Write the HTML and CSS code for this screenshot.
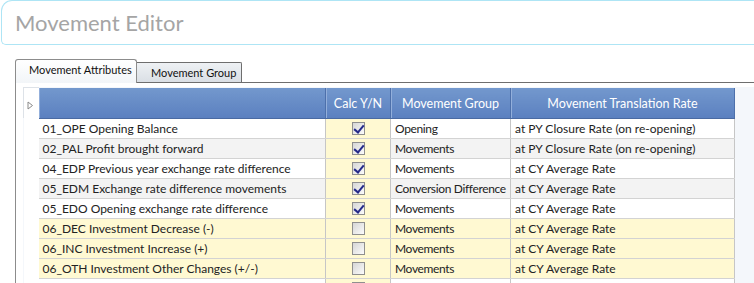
FILE: index.html
```html
<!DOCTYPE html>
<html lang="en">
<head>
    <meta charset="UTF-8">
    <meta name="viewport" content="width=device-width, initial-scale=1.0">
    <title>Movement Editor</title>
    <link rel="stylesheet" href="styles.css">
</head>
<body>
    <div class="title-bar">
        <h1>Movement Editor</h1>
    </div>
    <div class="tabs">
        <div class="tab active">Movement Attributes</div>
        <div class="tab">Movement Group</div>
    </div>
    <div class="panel">
        <div class="grid">
            <table>
                <colgroup>
                    <col class="c-exp"><col class="c-name"><col class="c-calc"><col class="c-group"><col class="c-rate">
                </colgroup>
                <thead>
                    <tr>
                        <th class="exp">
                            <svg width="7" height="9" viewBox="0 0 7 9"><path d="M1 1 L5.5 4.5 L1 8 Z" fill="#fff" stroke="#8a8a8a" stroke-width="1"/></svg>
                        </th>
                        <th></th>
                        <th>Calc Y/N</th>
                        <th>Movement Group</th>
                        <th>Movement Translation Rate</th>
                    </tr>
                </thead>
                <tbody>
                    <tr>
                        <td class="exp"></td>
                        <td>01_OPE Opening Balance</td>
                        <td class="calc"><span class="check on"></span></td>
                        <td class="group">Opening</td>
                        <td>at PY Closure Rate (on re-opening)</td>
                    </tr>
                    <tr class="alt">
                        <td class="exp"></td>
                        <td>02_PAL Profit brought forward</td>
                        <td class="calc"><span class="check on"></span></td>
                        <td class="group">Movements</td>
                        <td>at PY Closure Rate (on re-opening)</td>
                    </tr>
                    <tr>
                        <td class="exp"></td>
                        <td>04_EDP Previous year exchange rate difference</td>
                        <td class="calc"><span class="check on"></span></td>
                        <td class="group">Movements</td>
                        <td>at CY Average Rate</td>
                    </tr>
                    <tr class="alt">
                        <td class="exp"></td>
                        <td>05_EDM Exchange rate difference movements</td>
                        <td class="calc"><span class="check on"></span></td>
                        <td class="group">Conversion Difference</td>
                        <td>at CY Average Rate</td>
                    </tr>
                    <tr>
                        <td class="exp"></td>
                        <td>05_EDO Opening exchange rate difference</td>
                        <td class="calc"><span class="check on"></span></td>
                        <td class="group">Movements</td>
                        <td>at CY Average Rate</td>
                    </tr>
                    <tr class="alt off">
                        <td class="exp"></td>
                        <td>06_DEC Investment Decrease (-)</td>
                        <td class="calc"><span class="check"></span></td>
                        <td class="group">Movements</td>
                        <td>at CY Average Rate</td>
                    </tr>
                    <tr class="off">
                        <td class="exp"></td>
                        <td>06_INC Investment Increase (+)</td>
                        <td class="calc"><span class="check"></span></td>
                        <td class="group">Movements</td>
                        <td>at CY Average Rate</td>
                    </tr>
                    <tr class="alt off">
                        <td class="exp"></td>
                        <td>06_OTH Investment Other Changes (+/-)</td>
                        <td class="calc"><span class="check"></span></td>
                        <td class="group">Movements</td>
                        <td>at CY Average Rate</td>
                    </tr>
                    <tr>
                        <td class="exp"></td>
                        <td></td>
                        <td class="calc"><span class="check"></span></td>
                        <td class="group"></td>
                        <td></td>
                    </tr>
                </tbody>
            </table>
        </div>
    </div>
</body>
</html>
```

FILE: styles.css
```css
body {
    margin: 0;
    padding: 0;
    font-family: Lato, "Open Sans", sans-serif;
    color: #222;
    background: #fff;
    overflow: hidden;
    width: 754px;
    height: 283px;
}
.title-bar {
    margin-left: 1px;
    margin-right: -20px;
    height: 43px;
    border: 1px solid #aee5f5;
    border-right: none;
    border-radius: 11px 0 0 5px;
    padding-left: 13px;
}
.title-bar h1 {
    margin: 0;
    padding-top: 8px;
    font-family: Lato, "Liberation Sans", sans-serif;
    font-weight: 400;
    font-size: 22px;
    color: #a5a5a5;
}
.tabs {
    display: flex;
    align-items: flex-end;
    margin-top: 14px;
    margin-left: 15px;
    height: 23px;
}
.tab {
    box-sizing: border-box;
    height: 20px;
    width: 105px;
    padding-left: 14px;
    border: 1px solid #6e6e6e;
    border-bottom: none;
    border-left: none;
    border-radius: 0 2px 0 0;
    background: linear-gradient(#eef1f4, #dadfe5);
    font-size: 11px;
    line-height: 20px;
    white-space: nowrap;
    color: #111;
}
.tab.active {
    position: relative;
    z-index: 1;
    height: 24px;
    margin-bottom: -1px;
    width: 122px;
    padding-left: 13px;
    border: 1px solid #8c8c8c;
    border-bottom: none;
    border-radius: 3px 3px 0 0;
    background: linear-gradient(#ffffff, #f2f5f8);
    line-height: 20px;
}
.panel {
    border-top: 1px solid #6e6e6e;
    border-left: 1px solid #8c8c8c;
    margin-left: 15px;
    padding: 4px 0 0 7px;
    height: 200px;
}
.grid {
    background: #f4f7fb;
}
table {
    border-collapse: collapse;
    table-layout: fixed;
    width: 711px;
    font-size: 12px;
}
.c-exp { width: 15px; }
.c-name { width: 287px; }
.c-calc { width: 65px; }
.c-group { width: 120px; }
.c-rate { width: 224px; }
th {
    height: 26px;
    padding: 1px 0 0;
    background: linear-gradient(#7398cd, #5b80c0);
    color: #fff;
    font-weight: 400;
    font-size: 12.5px;
    border-right: 1px solid #4d70ab;
    border-bottom: 1px solid #4a6aa2;
    box-shadow: inset 1px 0 #93afdb;
}
th.exp {
    background: #fff;
    border: none;
    border-left: 1px solid #dde2e8;
    border-top: 1px solid #dde2e8;
    box-shadow: none;
    text-align: left;
    padding: 4px 0 0 3px;
}
th.exp svg {
    display: block;
}
td {
    height: 19px;
    padding: 0 0 0 4px;
    background: #fff;
    border-bottom: 1px solid #d3d3d3;
    border-right: 1px solid #c6c6c6;
    white-space: nowrap;
    overflow: hidden;
}
td.group {
    letter-spacing: -0.35px;
}
td.exp {
    border: none;
}
tr.alt td {
    background: #f3f3f3;
}
tr td.calc,
tr.off td {
    background: #fff9d2;
}
tr td.exp {
    background: #fff;
}
td.calc {
    text-align: center;
    padding: 0;
}
.check {
    display: inline-block;
    box-sizing: border-box;
    width: 13px;
    height: 13px;
    vertical-align: middle;
    border: 1px solid #8f8f8f;
    background: linear-gradient(135deg, #d6d6d6, #fbfbfb);
    position: relative;
    top: -1px;
}
.check.on::after {
    content: "";
    position: absolute;
    left: 3px;
    top: 0px;
    width: 4px;
    height: 8px;
    border-right: 2px solid #252a8a;
    border-bottom: 2px solid #252a8a;
    transform: rotate(40deg);
}
```
